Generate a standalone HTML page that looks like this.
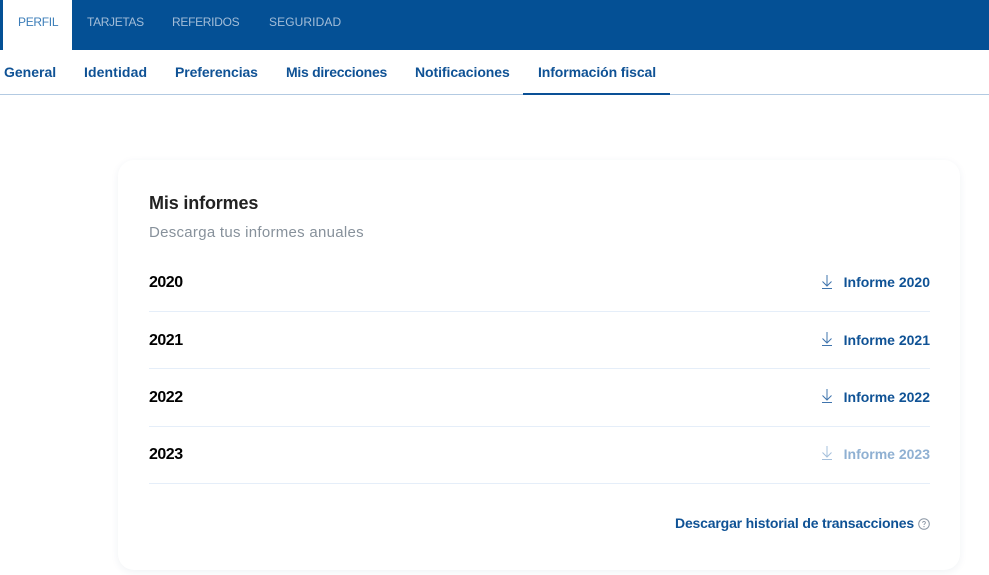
<!DOCTYPE html>
<html lang="es"><head><meta charset="utf-8"><title>Mis informes</title>
<style>
html,body{margin:0;padding:0;background:#fff}
body{width:989px;height:575px;position:relative;overflow:hidden;font-family:"Liberation Sans",sans-serif}
.a{position:absolute;white-space:nowrap;line-height:20px;height:20px}
.bar{position:absolute;left:0;top:0;width:989px;height:50px;background:#045095}
.white{position:absolute;left:3px;top:0;width:69px;height:50px;background:#fff}
.top{font-size:12px;top:12px;color:#a3bdd8}
.sub{font-size:14px;font-weight:700;color:#0f5295;top:62px}
.line{position:absolute;left:0;top:94px;width:989px;height:1px;background:#b3cae2}
.act{position:absolute;left:523px;top:93px;width:147px;height:2px;background:#0a5096}
.card{position:absolute;left:118px;top:160px;width:842px;height:410px;background:#fff;border-radius:16px;box-shadow:0 2px 8px rgba(40,70,110,.07)}
.yr{left:149px;font-size:16px;font-weight:700;color:#000;letter-spacing:-.5px}
.rule{position:absolute;left:149px;width:781px;height:1px;background:#e5eef9}
.lnk{right:59px;font-size:14px;font-weight:700;color:#0f5295}
.ic{position:absolute;left:821px;width:12px;height:15px}
</style></head><body>
<div class="bar"></div><div class="white"></div>
<span class="a top" style="left:18px;color:#3b7db8;letter-spacing:-.3px">PERFIL</span>
<span class="a top" style="left:87px;letter-spacing:-.35px">TARJETAS</span>
<span class="a top" style="left:172px;letter-spacing:-.3px">REFERIDOS</span>
<span class="a top" style="left:269px;letter-spacing:.1px">SEGURIDAD</span>

<span class="a sub" style="left:4px">General</span>
<span class="a sub" style="left:84px;letter-spacing:.1px">Identidad</span>
<span class="a sub" style="left:175px;letter-spacing:-.1px">Preferencias</span>
<span class="a sub" style="left:286px;letter-spacing:-.27px">Mis direcciones</span>
<span class="a sub" style="left:415px;letter-spacing:-.07px">Notificaciones</span>
<span class="a sub" style="left:538px;letter-spacing:-.1px">Información fiscal</span>
<div class="line"></div><div class="act"></div>

<div class="card"></div>
<span class="a" style="left:149px;top:193px;font-size:18px;font-weight:700;color:#222;letter-spacing:-.15px">Mis informes</span>
<span class="a" style="left:149px;top:222px;font-size:15px;color:#87919b;letter-spacing:.28px;margin-top:1px">Descarga tus informes anuales</span>

<span class="a yr" style="top:273px">2020</span>
<span class="a yr" style="top:331px">2021</span>
<span class="a yr" style="top:388px">2022</span>
<span class="a yr" style="top:445px">2023</span>

<div class="rule" style="top:311px"></div>
<div class="rule" style="top:368px"></div>
<div class="rule" style="top:426px"></div>
<div class="rule" style="top:483px"></div>

<svg class="ic" style="top:275px" viewBox="0 0 12 15" fill="none" stroke="#3f74ad" stroke-width="1"><path d="M6 0V11M1.5 6.5L6 11L10.5 6.5M1 13.5H11"/></svg>
<span class="a lnk" style="top:272px">Informe 2020</span>
<svg class="ic" style="top:332px" viewBox="0 0 12 15" fill="none" stroke="#3f74ad" stroke-width="1"><path d="M6 0V11M1.5 6.5L6 11L10.5 6.5M1 13.5H11"/></svg>
<span class="a lnk" style="top:330px">Informe 2021</span>
<svg class="ic" style="top:389px" viewBox="0 0 12 15" fill="none" stroke="#3f74ad" stroke-width="1"><path d="M6 0V11M1.5 6.5L6 11L10.5 6.5M1 13.5H11"/></svg>
<span class="a lnk" style="top:387px">Informe 2022</span>
<svg class="ic" style="top:446px" viewBox="0 0 12 15" fill="none" stroke="#a5c0dc" stroke-width="1"><path d="M6 0V11M1.5 6.5L6 11L10.5 6.5M1 13.5H11"/></svg>
<span class="a lnk" style="top:444px;color:#8fb0d2">Informe 2023</span>

<span class="a lnk" style="top:513px;right:75px;letter-spacing:-.17px">Descargar historial de transacciones</span>
<svg style="position:absolute;left:918px;top:518px" width="12" height="12" viewBox="0 0 12 12" fill="none"><circle cx="6" cy="6" r="5.3" stroke="#8b97a5"/><path d="M4.6 4.8C4.6 3 7.4 3 7.4 4.7C7.4 5.8 6 5.8 6 7" stroke="#8b97a5" stroke-width=".9"/><circle cx="6" cy="8.6" r=".6" fill="#8b97a5"/></svg>
</body></html>
